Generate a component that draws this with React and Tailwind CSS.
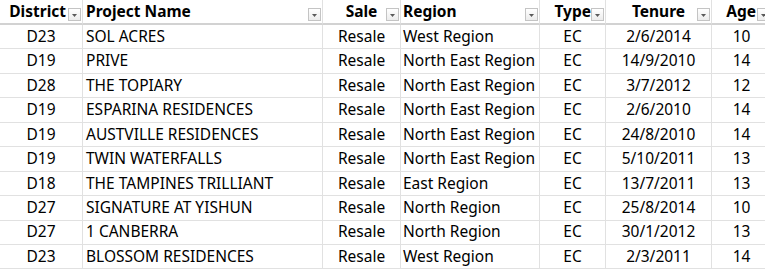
import React from "react";

const rows = [
  ["D23", "SOL ACRES", "Resale", "West Region", "EC", "2/6/2014", "10"],
  ["D19", "PRIVE", "Resale", "North East Region", "EC", "14/9/2010", "14"],
  ["D28", "THE TOPIARY", "Resale", "North East Region", "EC", "3/7/2012", "12"],
  ["D19", "ESPARINA RESIDENCES", "Resale", "North East Region", "EC", "2/6/2010", "14"],
  ["D19", "AUSTVILLE RESIDENCES", "Resale", "North East Region", "EC", "24/8/2010", "14"],
  ["D19", "TWIN WATERFALLS", "Resale", "North East Region", "EC", "5/10/2011", "13"],
  ["D18", "THE TAMPINES TRILLIANT", "Resale", "East Region", "EC", "13/7/2011", "13"],
  ["D27", "SIGNATURE AT YISHUN", "Resale", "North Region", "EC", "25/8/2014", "10"],
  ["D27", "1 CANBERRA", "Resale", "North Region", "EC", "30/1/2012", "13"],
  ["D23", "BLOSSOM RESIDENCES", "Resale", "West Region", "EC", "2/3/2011", "14"],
];

function Drop() {
  return (
    <span className="absolute right-[1px] top-[8px] w-[13px] h-[13px] border border-[#c4c4c4] bg-gradient-to-b from-[#ffffff] to-[#ececec] flex items-center justify-center">
      <svg width="5" height="3" viewBox="0 0 5 3" className="mt-[2px]">
        <polygon points="0,0 5,0 2.5,3" fill="#5a5a5a" />
      </svg>
    </span>
  );
}

const headCls = "relative h-[25px] border-b-2 border-r border-b-[#d2d2d2] border-r-[#e1e1e1] flex items-center font-bold text-black whitespace-nowrap";
const cellCls = "h-[24.44px] border-b border-r border-[#e1e1e1] flex items-center text-black whitespace-nowrap overflow-hidden";

export default function App() {
  return (
    <div className="w-[765px] h-[273px] overflow-hidden bg-white" style={{ fontFamily: '"Noto Sans", sans-serif' }}>
      <div className="grid grid-cols-[83px_240px_78px_139px_66px_106px_60px] w-[772px] text-[15.5px] leading-none">
        <div className={headCls + " justify-end pr-[16px]"}>District<Drop /></div>
        <div className={headCls + " justify-start pl-[3px]"}>Project Name<Drop /></div>
        <div className={headCls + " justify-center"}>Sale<Drop /></div>
        <div className={headCls + " justify-start pl-[2px]"}>Region<Drop /></div>
        <div className={headCls + " justify-end pr-[14px]"}>Type<Drop /></div>
        <div className={headCls + " justify-center"}>Tenure<Drop /></div>
        <div className={headCls + " justify-end pr-[15px]"}>Age<Drop /></div>
        {rows.map((r, i) => (
          <React.Fragment key={i}>
            <div className={cellCls + " justify-center"}>{r[0]}</div>
            <div className={cellCls + " justify-start pl-[3px]"}>{r[1]}</div>
            <div className={cellCls + " justify-center"}>{r[2]}</div>
            <div className={cellCls + " justify-start pl-[2px]"}>{r[3]}</div>
            <div className={cellCls + " justify-center"}>{r[4]}</div>
            <div className={cellCls + " justify-center"}>{r[5]}</div>
            <div className={cellCls + " justify-center"}>{r[6]}</div>
          </React.Fragment>
        ))}
      </div>
    </div>
  );
}
